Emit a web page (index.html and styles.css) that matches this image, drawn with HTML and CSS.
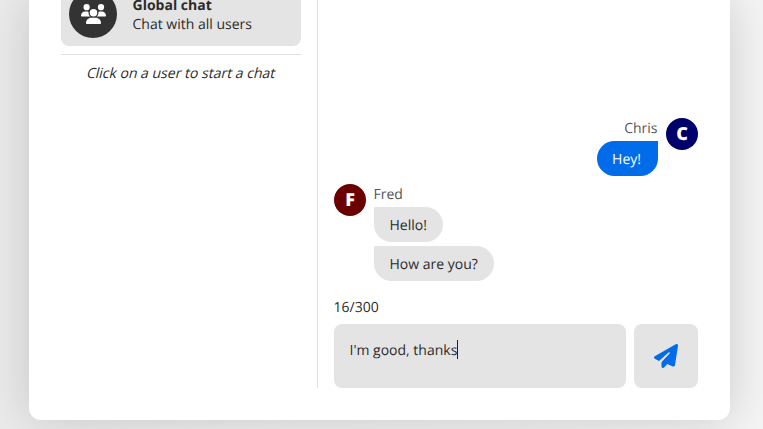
FILE: index.html
```html
<!DOCTYPE html>
<html lang="en">
<head>
<meta charset="utf-8">
<title>Chat</title>
<link rel="stylesheet" href="styles.css">
</head>
<body>
<main class="card">
  <aside class="sidebar">
    <div class="room">
      <div class="room-icon">
        <svg viewBox="0 0 640 512" width="25" height="20" fill="currentColor"><path d="M144 0a80 80 0 1 1 0 160A80 80 0 1 1 144 0zM512 0a80 80 0 1 1 0 160A80 80 0 1 1 512 0zM0 298.7C0 239.8 47.8 192 106.7 192h42.7c15.9 0 31 3.5 44.6 9.7c-1.3 7.2-1.9 14.7-1.9 22.3c0 38.2 16.8 72.5 43.3 96c-.2 0-.4 0-.7 0H21.3C9.6 320 0 310.4 0 298.7zM405.3 320c-.2 0-.4 0-.7 0c26.6-23.5 43.3-57.8 43.3-96c0-7.6-.7-15-1.9-22.3c13.6-6.3 28.7-9.7 44.6-9.7h42.7C592.2 192 640 239.8 640 298.7c0 11.8-9.6 21.3-21.3 21.3H405.3zM224 224a96 96 0 1 1 192 0 96 96 0 1 1 -192 0zM128 485.3C128 411.7 187.7 352 261.3 352H378.7C452.3 352 512 411.7 512 485.3c0 14.7-11.9 26.7-26.7 26.7H154.7c-14.7 0-26.7-11.9-26.7-26.7z"/></svg>
      </div>
      <div class="room-text"><strong>Global chat</strong><span>Chat with all users</span></div>
    </div>
    <p class="hint"><span>Click on a user to start a chat</span></p>
  </aside>
  <section class="chat">
    <div class="group own">
      <div class="avatar navy">C</div>
      <div class="messages">
        <span class="name">Chris</span>
        <p class="bubble">Hey!</p>
      </div>
    </div>
    <div class="group">
      <div class="avatar maroon">F</div>
      <div class="messages">
        <span class="name">Fred</span>
        <p class="bubble">Hello!</p>
        <p class="bubble">How are you?</p>
      </div>
    </div>
    <div class="counter">16/300</div>
    <form class="composer">
      <div class="input"><span>I'm good, thanks</span><i class="caret"></i></div>
      <button class="send" type="button" aria-label="Send">
        <svg viewBox="0 0 512 512" width="24" height="24" fill="currentColor"><path d="M498.1 5.6c10.1 7 15.4 19.1 13.5 31.2l-64 416c-1.5 9.7-7.4 18.2-16 23s-18.9 5.4-28 1.6L284 427.7l-68.5 74.1c-8.9 9.7-22.9 12.9-35.2 8.1S160 493.2 160 480V396.4c0-4 1.5-7.8 4.2-10.7L331.8 202.8c5.8-6.3 5.6-16-.4-22s-15.7-6.4-22-.7L106 360.8 17.7 316.6C7.1 311.3 .3 300.7 0 288.9s5.9-22.8 16.1-28.7l448-256c10.7-6.1 23.9-5.5 34 1.4z"/></svg>
      </button>
    </form>
  </section>
</main>
</body>
</html>
```
FILE: styles.css
```css
* { box-sizing: border-box; }
html { height: 100%; overflow: hidden; }
body {
  margin: 0;
  height: 429px;
  overflow: hidden;
  padding: 0 33px 9px 29px;
  background: linear-gradient(90deg, #ebebeb, #f4f4f4);
  font: 14px/19px "Open Sans", "Noto Sans", sans-serif;
  text-rendering: geometricPrecision;
  color: #2b2b2b;
}
p { margin: 0; }
.card {
  display: flex;
  height: 420px;
  padding: 0 32px 32px;
  background: #fff;
  border-radius: 0 0 12px 12px;
  box-shadow: 0 0 48px rgba(0, 0, 0, .17);
}
.sidebar {
  width: 256px;
  flex: none;
  padding-right: 16px;
}
.room {
  display: flex;
  align-items: flex-end;
  gap: 15.5px;
  height: 46px;
  padding: 0 8px 8px;
  background: #e4e4e4;
  border-radius: 0 0 8px 8px;
}
.room-icon {
  display: grid;
  place-items: center;
  width: 48px;
  height: 48px;
  flex: none;
  border-radius: 50%;
  background: #333;
  color: #fff;
}
.room-text {
  display: flex;
  flex-direction: column;
  height: 42px;
}
.hint {
  margin-top: 8px;
  padding-top: 9px;
  border-top: 1px solid #e0e0e0;
  text-align: center;
}
.hint span {
  display: inline-block;
  transform: skewX(-14deg);
}
.chat {
  display: flex;
  flex-direction: column;
  justify-content: flex-end;
  flex: 1;
  padding-left: 16px;
  border-left: 1px solid #e0e0e0;
}
.group {
  display: flex;
  gap: 8px;
  margin-bottom: 8px;
}
.own { flex-direction: row-reverse; }
.avatar {
  display: grid;
  place-items: center;
  width: 32px;
  height: 32px;
  padding-top: 1px;
  flex: none;
  border-radius: 50%;
  color: #fff;
  font-size: 18px;
  font-weight: 800;
}
.navy { background: #00006b; }
.maroon { background: #6b0000; }
.messages {
  display: flex;
  flex-direction: column;
  align-items: flex-start;
  gap: 4px;
}
.own .messages { align-items: flex-end; }
.name {
  height: 19px;
  padding-top: 1px;
  color: #555;
  text-indent: -.5px;
}
.own .name { padding-right: .5px; }
.bubble {
  padding: 9px 16px 7px;
  background: #e4e4e4;
  border-radius: 0 18px 18px 18px;
  text-indent: -.5px;
}
.own .bubble {
  padding-right: 17px;
  background: #006ce9;
  color: #fff;
  font-weight: 500;
  border-radius: 18px 0 18px 18px;
}
.counter {
  height: 19px;
  margin: 8px 0;
  padding-top: 1px;
  text-indent: -.5px;
}
.composer {
  display: flex;
  gap: 8px;
}
.input {
  display: flex;
  flex: 1;
  height: 64px;
  padding: 17px 16px 15px 15.5px;
  background: #e4e4e4;
  border-radius: 8px;
}
.caret {
  width: 1px;
  height: 19px;
  margin-top: -1px;
  background: #222;
}
.send {
  display: grid;
  place-items: center;
  width: 64px;
  height: 64px;
  padding: 0;
  border: 0;
  border-radius: 8px;
  background: #e4e4e4;
  color: #006ce9;
}
```
